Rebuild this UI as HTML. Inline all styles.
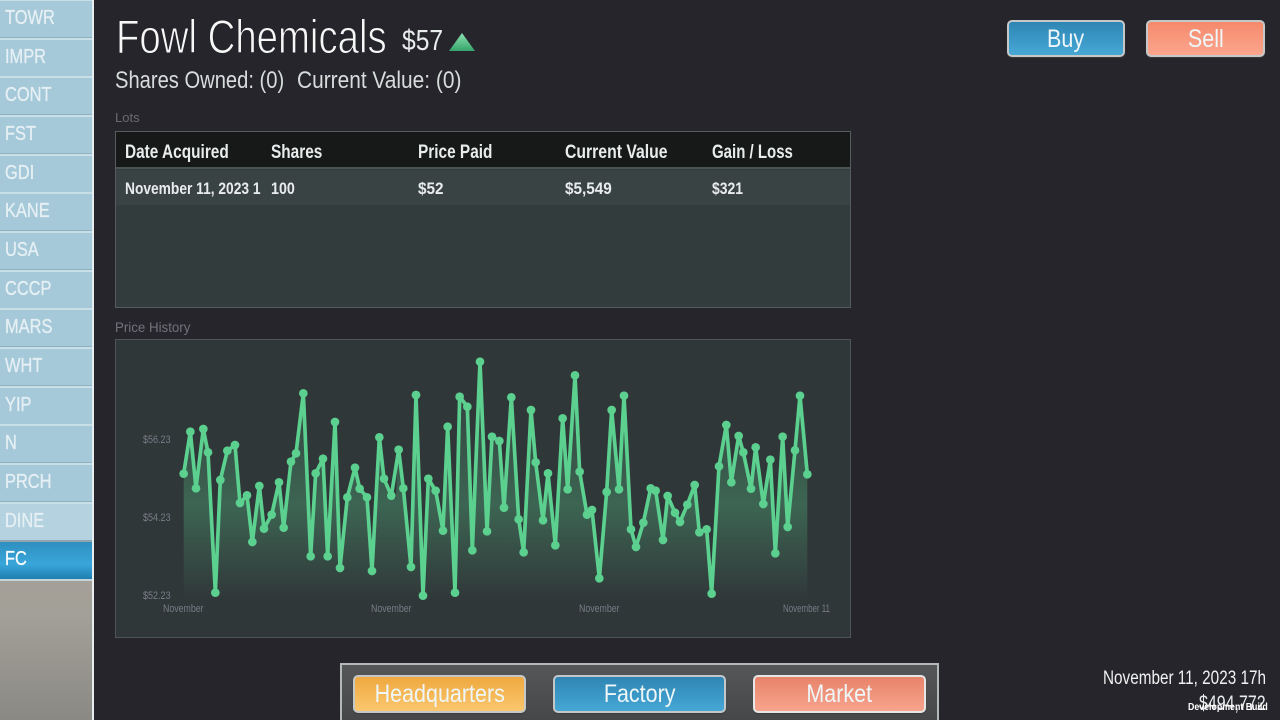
<!DOCTYPE html>
<html><head><meta charset="utf-8"><style>
*{box-sizing:border-box}
html,body{margin:0;padding:0;width:1280px;height:720px;overflow:hidden;background:#25252b}
body{font-family:"Liberation Sans",sans-serif;position:relative;filter:blur(.3px)}
.t{position:absolute;white-space:nowrap;color:#e8ecec;line-height:1;transform-origin:0 50%}
.s{position:absolute;left:0;width:92px;height:39px;background:#a5c9d9;border-top:2px solid #c9dfe8;border-bottom:1px solid #8fb0bf;color:#e6f0f4;font-size:20px;line-height:34px;padding-left:5px;-webkit-text-stroke:.3px #e6f0f4}
.s span{display:inline-block;transform:scaleX(.82);transform-origin:0 50%}
.btn{position:absolute;border-radius:5px;border:2px solid #c4c8c8;box-shadow:0 1px 1px 0 #3c3c3c;color:#eef6f8;text-align:center;font-size:25px}
.btn span{display:inline-block;transform:scaleX(.86)}
.h{font-size:19px;font-weight:700;transform:scaleX(.81);top:143px}
.r{font-size:17px;font-weight:700;top:180px}
.k{font-size:11px;color:#767d86;transform:scaleX(.82)}
</style></head><body>
<div style="position:absolute;left:0;top:0;width:92px;height:720px;background:linear-gradient(#9a9892,#aaa7a0 40%,#a3a098 85%,#8a8983)"></div>
<div style="position:absolute;left:92px;top:0;width:2px;height:720px;background:#e8eef0"></div>
<div class="s" style="top:-1px"><span>TOWR</span></div>
<div class="s" style="top:37.7px"><span>IMPR</span></div>
<div class="s" style="top:76.3px"><span>CONT</span></div>
<div class="s" style="top:115px"><span>FST</span></div>
<div class="s" style="top:153.6px"><span>GDI</span></div>
<div class="s" style="top:192.3px"><span>KANE</span></div>
<div class="s" style="top:231px"><span>USA</span></div>
<div class="s" style="top:269.6px"><span>CCCP</span></div>
<div class="s" style="top:308.3px"><span>MARS</span></div>
<div class="s" style="top:347px"><span>WHT</span></div>
<div class="s" style="top:385.6px"><span>YIP</span></div>
<div class="s" style="top:424.3px"><span>N</span></div>
<div class="s" style="top:463px"><span>PRCH</span></div>
<div class="s" style="top:501.6px;background:#b4d2df"><span>DINE</span></div>
<div class="s" style="top:540.3px;height:41px;background:linear-gradient(#2f8fc0,#39a6da 60%,#1f7fb0);color:#fff;border-top:2px solid #8fa5b0;border-bottom:2px solid #c5d5dc"><span>FC</span></div>

<div class="t" style="left:116px;top:13px;font-size:47px;color:#f6f8f8;transform:scaleX(.816);-webkit-text-stroke:1px #25252b">Fowl Chemicals</div>
<div class="t" style="left:402px;top:27px;font-size:29px;transform:scaleX(.85)">$57</div>
<svg style="position:absolute;left:449px;top:33px" width="26" height="19"><defs><linearGradient id="tri" x1="0" y1="0" x2="0" y2="1"><stop offset="0" stop-color="#8fe0b0"/><stop offset="1" stop-color="#34a56b"/></linearGradient></defs><polygon points="13,0 26,18 0,18" fill="url(#tri)"/></svg>
<div class="t" style="left:115px;top:69px;font-size:24px;color:#d8dcdc;transform:scaleX(.84)">Shares Owned: (0)</div>
<div class="t" style="left:297px;top:69px;font-size:24px;color:#d8dcdc;transform:scaleX(.87)">Current Value: (0)</div>

<div class="t" style="left:115px;top:111px;font-size:13px;color:#6a6a6e">Lots</div>
<div style="position:absolute;left:115px;top:131px;width:736px;height:177px;background:#333c3d;border:1px solid #555c5e"></div>
<div style="position:absolute;left:116px;top:132px;width:734px;height:37px;background:#171918;border-bottom:2px solid #4a5455"></div>
<div style="position:absolute;left:116px;top:170px;width:734px;height:35px;background:#394344"></div>
<div class="t h" style="left:125px">Date Acquired</div>
<div class="t h" style="left:271px">Shares</div>
<div class="t h" style="left:418px">Price Paid</div>
<div class="t h" style="left:565px;transform:scaleX(.83)">Current Value</div>
<div class="t h" style="left:712px;transform:scaleX(.79)">Gain / Loss</div>
<div class="t r" style="left:125px;transform:scaleX(.81)">November 11, 2023 1</div>
<div class="t r" style="left:271px;transform:scaleX(.84)">100</div>
<div class="t r" style="left:418px;transform:scaleX(.9)">$52</div>
<div class="t r" style="left:565px;transform:scaleX(.9)">$5,549</div>
<div class="t r" style="left:712px;transform:scaleX(.82)">$321</div>

<div class="t" style="left:115px;top:320px;font-size:14px;color:#72727a;transform:scaleX(.95)">Price History</div>
<div style="position:absolute;left:115px;top:339px;width:736px;height:299px;background:#303739;border:1px solid #4f5658"></div>

<svg style="position:absolute;left:0;top:0" width="1280" height="720" viewBox="0 0 1280 720">
<defs><linearGradient id="f" gradientUnits="userSpaceOnUse" x1="0" y1="360" x2="0" y2="600"><stop offset="0" stop-color="#5bd08f" stop-opacity=".02"/><stop offset=".6" stop-color="#5bd08f" stop-opacity=".3"/><stop offset="1" stop-color="#5bd08f" stop-opacity="0"/></linearGradient></defs>
<polygon fill="url(#f)" points="183.7,600 183.7,473.7 190.3,431.7 196,488.3 203.3,429 208,452.3 215.3,592.7 220.3,480 227.3,450.7 235,445 240,503 247,495.3 252.3,542 259.3,486 264,528.7 271.7,514.7 279,482.3 283.7,527.7 291,461.7 296,453.3 303.3,393.3 310.7,556.3 315.7,473.3 323,458.7 327.7,556.3 335,422 340,568 347.3,497.3 355,467.7 359.7,488.7 367,497.3 372,571 379.3,437.3 384,478.7 391.3,495.3 396,498.7 398,449 404.3,488.3 411,567 416,395 423,595.7 428.3,478.7 435.7,490.7 443,530.7 447.7,426.7 455,592.7 459.7,396.7 467.3,406.7 472.3,550.3 480,361.7 487,531.3 492,436.7 499.3,441 504,507.7 511.3,397.3 518.7,519.3 523.7,552.3 531,410 535.7,462.3 543,520.3 548,473.3 555.3,545.3 562.7,418.3 567.7,489.3 575,375.3 579.7,471.7 587,514.7 592,510 599.3,578.3 606.7,492 611.7,410 619,489.3 624,395.7 631,529.3 636,547 643.3,522.7 650.7,488.3 655.7,490.7 663,540 667.7,496 675,512.7 680,522 687.3,504.7 694.7,485 699.3,532.3 706.7,529.3 711.7,593.7 719,466.3 726.3,425 731.3,482.3 739,436 743.3,452.3 751,488.7 755.7,447.3 763.3,504 770.3,459.7 775.3,553.3 782.7,436.7 787.7,527 795,450.3 800,395.7 807.3,474.3 807.3,600"/>
<g transform="translate(110 340) scale(.33333)"><polyline fill="none" stroke="#5bd08f" stroke-width="11" stroke-linejoin="round" points="221,401 241,275 258,445 280,267 294,337 316,758 331,420 352,332 375,315 390,489 411,466 427,606 448,438 462,566 485,524 507,427 521,563 543,365 558,340 580,160 602,649 617,400 639,356 653,649 675,246 690,684 712,472 735,383 749,446 771,472 786,693 808,292 822,416 844,467 866,329 880,445 903,681 918,165 939,767 955,416 977,452 999,572 1013,260 1035,758 1049,170 1072,200 1087,631 1110,65"/>
<g fill="#5bd08f"><circle cx="221" cy="401" r="13"/><circle cx="241" cy="275" r="13"/><circle cx="258" cy="445" r="13"/><circle cx="280" cy="267" r="13"/><circle cx="294" cy="337" r="13"/><circle cx="316" cy="758" r="13"/><circle cx="331" cy="420" r="13"/><circle cx="352" cy="332" r="13"/><circle cx="375" cy="315" r="13"/><circle cx="390" cy="489" r="13"/><circle cx="411" cy="466" r="13"/><circle cx="427" cy="606" r="13"/><circle cx="448" cy="438" r="13"/><circle cx="462" cy="566" r="13"/><circle cx="485" cy="524" r="13"/><circle cx="507" cy="427" r="13"/><circle cx="521" cy="563" r="13"/><circle cx="543" cy="365" r="13"/><circle cx="558" cy="340" r="13"/><circle cx="580" cy="160" r="13"/><circle cx="602" cy="649" r="13"/><circle cx="617" cy="400" r="13"/><circle cx="639" cy="356" r="13"/><circle cx="653" cy="649" r="13"/><circle cx="675" cy="246" r="13"/><circle cx="690" cy="684" r="13"/><circle cx="712" cy="472" r="13"/><circle cx="735" cy="383" r="13"/><circle cx="749" cy="446" r="13"/><circle cx="771" cy="472" r="13"/><circle cx="786" cy="693" r="13"/><circle cx="808" cy="292" r="13"/><circle cx="822" cy="416" r="13"/><circle cx="844" cy="467" r="13"/><circle cx="866" cy="329" r="13"/><circle cx="880" cy="445" r="13"/><circle cx="903" cy="681" r="13"/><circle cx="918" cy="165" r="13"/><circle cx="939" cy="767" r="13"/><circle cx="955" cy="416" r="13"/><circle cx="977" cy="452" r="13"/><circle cx="999" cy="572" r="13"/><circle cx="1013" cy="260" r="13"/><circle cx="1035" cy="758" r="13"/><circle cx="1049" cy="170" r="13"/><circle cx="1072" cy="200" r="13"/><circle cx="1087" cy="631" r="13"/><circle cx="1110" cy="65" r="13"/></g></g>
<g transform="translate(480 340) scale(.33333)"><polyline fill="none" stroke="#5bd08f" stroke-width="11" stroke-linejoin="round" points="0,65 21,574 36,290 58,303 72,503 94,172 116,538 131,637 153,210 167,367 189,541 204,400 226,616 248,235 263,448 285,106 299,395 321,524 336,510 358,715 380,456 395,210 417,448 432,167 453,568 468,621 490,548 512,445 527,452 549,600 563,468 585,518 600,546 622,494 644,435 658,577 680,568 695,761 717,379 739,255 754,427 776,288 790,337 813,446 827,322 850,492 871,359 886,640 908,290 923,561 945,331 960,167 982,403"/>
<g fill="#5bd08f"><circle cx="21" cy="574" r="13"/><circle cx="36" cy="290" r="13"/><circle cx="58" cy="303" r="13"/><circle cx="72" cy="503" r="13"/><circle cx="94" cy="172" r="13"/><circle cx="116" cy="538" r="13"/><circle cx="131" cy="637" r="13"/><circle cx="153" cy="210" r="13"/><circle cx="167" cy="367" r="13"/><circle cx="189" cy="541" r="13"/><circle cx="204" cy="400" r="13"/><circle cx="226" cy="616" r="13"/><circle cx="248" cy="235" r="13"/><circle cx="263" cy="448" r="13"/><circle cx="285" cy="106" r="13"/><circle cx="299" cy="395" r="13"/><circle cx="321" cy="524" r="13"/><circle cx="336" cy="510" r="13"/><circle cx="358" cy="715" r="13"/><circle cx="380" cy="456" r="13"/><circle cx="395" cy="210" r="13"/><circle cx="417" cy="448" r="13"/><circle cx="432" cy="167" r="13"/><circle cx="453" cy="568" r="13"/><circle cx="468" cy="621" r="13"/><circle cx="490" cy="548" r="13"/><circle cx="512" cy="445" r="13"/><circle cx="527" cy="452" r="13"/><circle cx="549" cy="600" r="13"/><circle cx="563" cy="468" r="13"/><circle cx="585" cy="518" r="13"/><circle cx="600" cy="546" r="13"/><circle cx="622" cy="494" r="13"/><circle cx="644" cy="435" r="13"/><circle cx="658" cy="577" r="13"/><circle cx="680" cy="568" r="13"/><circle cx="695" cy="761" r="13"/><circle cx="717" cy="379" r="13"/><circle cx="739" cy="255" r="13"/><circle cx="754" cy="427" r="13"/><circle cx="776" cy="288" r="13"/><circle cx="790" cy="337" r="13"/><circle cx="813" cy="446" r="13"/><circle cx="827" cy="322" r="13"/><circle cx="850" cy="492" r="13"/><circle cx="871" cy="359" r="13"/><circle cx="886" cy="640" r="13"/><circle cx="908" cy="290" r="13"/><circle cx="923" cy="561" r="13"/><circle cx="945" cy="331" r="13"/><circle cx="960" cy="167" r="13"/><circle cx="982" cy="403" r="13"/></g></g>
</svg>
<div class="t k" style="left:143px;top:435px">$56.23</div>
<div class="t k" style="left:143px;top:513px">$54.23</div>
<div class="t k" style="left:143px;top:591px">$52.23</div>
<div class="t k" style="left:163px;top:604px;transform:scaleX(.8)">November</div>
<div class="t k" style="left:371px;top:604px;transform:scaleX(.8)">November</div>
<div class="t k" style="left:579px;top:604px;transform:scaleX(.8)">November</div>
<div class="t k" style="left:783px;top:604px;transform:scaleX(.72)">November 11</div>

<div class="btn" style="left:1007px;top:20px;width:118px;height:37px;line-height:34px;background:linear-gradient(#2f86b4,#46a8d6)"><span>Buy</span></div>
<div class="btn" style="left:1146px;top:20px;width:119px;height:37px;line-height:34px;background:linear-gradient(#f58a6c,#fba68e)"><span>Sell</span></div>

<div style="position:absolute;left:340px;top:663px;width:599px;height:57px;background:linear-gradient(#545658,#454749);border:2px solid #b5b8b8;border-bottom:0"></div>
<div class="btn" style="left:353px;top:675px;width:173px;height:38px;line-height:34px;background:linear-gradient(#efa93f,#fbc76e)"><span>Headquarters</span></div>
<div class="btn" style="left:553px;top:675px;width:173px;height:38px;line-height:34px;background:linear-gradient(#2f86b4,#46a8d6)"><span>Factory</span></div>
<div class="btn" style="left:753px;top:675px;width:173px;height:38px;line-height:34px;background:linear-gradient(#e8836a,#f8a48e);border-color:#e6e6e6"><span>Market</span></div>

<div class="t" style="left:1103px;top:669px;font-size:19px;color:#f0f2f2;transform:scaleX(.805)">November 11, 2023 17h</div>
<div class="t" style="left:1199px;top:693px;font-size:21px;color:#e8ecec;transform:scaleX(.76)">$494,772</div>
<div class="t" style="left:1188px;top:703px;font-size:10px;color:#fff;font-weight:700;transform:scaleX(.88)">Development Build</div>
</body></html>
